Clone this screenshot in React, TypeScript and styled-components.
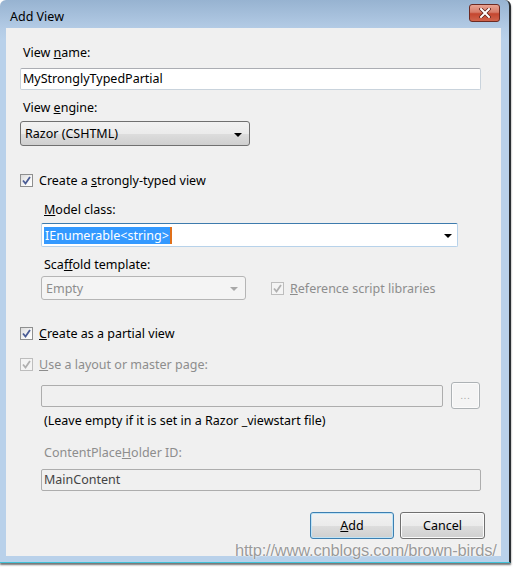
import React from "react";
import styled, { createGlobalStyle } from "styled-components";

const Global = createGlobalStyle`
  html, body { margin: 0; padding: 0; background: #ffffff; }
  body { font-family: "Noto Sans", "Open Sans", sans-serif; }
  #root { width: 513px; height: 567px; position: relative; overflow: hidden; }
`;

const Window = styled.div`
  position: relative;
  width: 509px;
  height: 562px;
  border-radius: 6px 6px 0 0;
  background: linear-gradient(180deg, #97b3d1 0px, #b3cbe5 28px, #b9d1ea 40px, #b9d1ea 100%);
  border-right: 2px solid #2b2f33;
  border-bottom: 1px solid #3fc2d8;
  box-shadow: 0 2px 2px rgba(0, 0, 0, 0.55);
  display: flex;
  flex-direction: column;
`;

const TitleBar = styled.div`
  height: 28px;
  display: flex;
  align-items: center;
  justify-content: space-between;
  padding: 0 9px 0 10px;
`;

const Title = styled.div`
  font-family: "Noto Sans", sans-serif;
  font-size: 12.5px;
  color: #000;
  padding-top: 4px;
`;

const CloseBtn = styled.div`
  width: 29px;
  height: 16px;
  margin-top: -3px;
  border: 1px solid #6d2a22;
  border-radius: 3px;
  background: linear-gradient(180deg, #e8a493 0%, #d77c69 45%, #c4462f 55%, #d0644c 100%);
  display: flex;
  align-items: center;
  justify-content: center;
`;

const Client = styled.div`
  margin: 0 0 0 6px;
  width: 495px;
  height: 528px;
  background: #f0f0f0;
  box-sizing: border-box;
  padding: 17px 16px 17px 14px;
  display: flex;
  flex-direction: column;
  font-size: 12.5px;
  color: #000;
`;

const Label = styled.div<{ $mt?: number; $indent?: number; $muted?: boolean }>`
  height: 16px;
  line-height: 16px;
  margin-top: ${(p) => p.$mt ?? 0}px;
  padding-left: ${(p) => p.$indent ?? 3}px;
  color: ${(p) => (p.$muted ? "#8d8d8d" : "#000")};
  font-size: 12.5px;
  white-space: nowrap;
`;

const TextBox = styled.div<{ $mt?: number; $w: number; $disabled?: boolean; $ml?: number }>`
  box-sizing: border-box;
  width: ${(p) => p.$w}px;
  height: 22px;
  margin-top: ${(p) => p.$mt ?? 0}px;
  margin-left: ${(p) => p.$ml ?? 0}px;
  border: 1px solid ${(p) => (p.$disabled ? "#adadad" : "#c9d3dc")};
  border-top-color: ${(p) => (p.$disabled ? "#adadad" : "#abadb3")};
  border-radius: 2px;
  background: ${(p) => (p.$disabled ? "#f0f0f0" : "#ffffff")};
  padding-left: 2px;
  line-height: 20px;
  font-size: 12.5px;
  color: ${(p) => (p.$disabled ? "#444" : "#000")};
  white-space: nowrap;
  flex-shrink: 0;
`;

const Select = styled.div<{ $mt?: number; $w: number; $h: number; $disabled?: boolean }>`
  box-sizing: border-box;
  width: ${(p) => p.$w}px;
  height: ${(p) => p.$h}px;
  margin-top: ${(p) => p.$mt ?? 0}px;
  border: 1px solid ${(p) => (p.$disabled ? "#b5b5b5" : "#707070")};
  border-radius: 3px;
  background: ${(p) =>
    p.$disabled
      ? "#f4f4f4"
      : "linear-gradient(180deg, #f2f2f2 0%, #ebebeb 50%, #dddddd 51%, #cfcfcf 100%)"};
  display: flex;
  align-items: center;
  justify-content: space-between;
  padding: 0 7px 0 4px;
  font-size: 12.5px;
  color: ${(p) => (p.$disabled ? "#8d8d8d" : "#000")};
  flex-shrink: 0;
`;

const Arrow = styled.span<{ $disabled?: boolean }>`
  width: 0;
  height: 0;
  border-left: 4px solid transparent;
  border-right: 4px solid transparent;
  border-top: 4px solid ${(p) => (p.$disabled ? "#a8a8a8" : "#000")};
  margin-top: 2px;
`;

const Combo = styled.div<{ $mt?: number }>`
  box-sizing: border-box;
  width: 417px;
  height: 24px;
  margin-top: ${(p) => p.$mt ?? 0}px;
  border: 1px solid #b7d2ea;
  border-top-color: #3d7bad;
  border-radius: 2px;
  background: #fff;
  display: flex;
  align-items: center;
  justify-content: space-between;
  padding: 0 5px 0 2px;
`;

const Selected = styled.span`
  background: #3399ff;
  color: #fff;
  height: 17px;
  line-height: 17px;
  padding: 0 1px;
  font-size: 12.5px;
  border-right: 2px solid #e0701a;
`;

const CheckRow = styled.div<{ $mt?: number; $disabled?: boolean; $ml?: number }>`
  display: flex;
  align-items: center;
  height: 16px;
  margin-top: ${(p) => p.$mt ?? 0}px;
  margin-left: ${(p) => p.$ml ?? 0}px;
  gap: 6px;
  color: ${(p) => (p.$disabled ? "#8d8d8d" : "#000")};
  font-size: 12.5px;
  white-space: nowrap;
`;

const Box = styled.span<{ $disabled?: boolean }>`
  box-sizing: border-box;
  width: 13px;
  height: 13px;
  border: 1px solid ${(p) => (p.$disabled ? "#bdbdbd" : "#8e8f8f")};
  background: ${(p) =>
    p.$disabled ? "#f4f4f4" : "linear-gradient(135deg, #dcdcdc 0%, #f6f6f6 60%, #ffffff 100%)"};
  display: flex;
  align-items: center;
  justify-content: center;
  flex-shrink: 0;
`;

const Indent = styled.div`
  margin-left: 21px;
  display: flex;
  flex-direction: column;
`;

const Row = styled.div<{ $mt?: number; $gap: number }>`
  display: flex;
  align-items: center;
  margin-top: ${(p) => p.$mt ?? 0}px;
  gap: ${(p) => p.$gap}px;
`;

const Button = styled.div<{ $default?: boolean; $w: number; $disabled?: boolean; $h?: number }>`
  box-sizing: border-box;
  width: ${(p) => p.$w}px;
  height: ${(p) => p.$h ?? 27}px;
  border: 1px solid ${(p) => (p.$disabled ? "#adb2b5" : p.$default ? "#3c7fb1" : "#707070")};
  border-radius: 3px;
  background: ${(p) =>
    p.$disabled
      ? "#f4f4f4"
      : "linear-gradient(180deg, #f2f2f2 0%, #ebebeb 50%, #dddddd 51%, #cfcfcf 100%)"};
  box-shadow: ${(p) => (p.$default ? "inset 0 0 0 1px #bfe3f6" : "inset 0 0 0 1px #fbfbfb")};
  display: flex;
  align-items: center;
  justify-content: center;
  font-size: 12.5px;
  color: ${(p) => (p.$disabled ? "#a0a0a0" : "#000")};
  flex-shrink: 0;
`;

const Dots = styled.span`
  font-size: 9px;
  letter-spacing: 1px;
`;

const Buttons = styled.div`
  display: flex;
  justify-content: flex-end;
  gap: 6px;
  margin-top: 21px;
`;

const Watermark = styled.div`
  position: absolute;
  left: 235px;
  top: 541px;
  font-family: "Liberation Sans", Arial, sans-serif;
  font-size: 16.5px;
  color: #9a9a9a;
  text-shadow: 0 0 2px #ffffff, 0 0 1px #ffffff;
  letter-spacing: -0.2px;
  white-space: nowrap;
`;

const Check = ({ disabled }: { disabled?: boolean }) => (
  <svg width="9" height="9" viewBox="0 0 9 9">
    <path
      d="M1 4.5 L3.5 7.5 L8 1"
      fill="none"
      stroke={disabled ? "#b0b0b0" : "#4a5c95"}
      strokeWidth="1.8"
    />
  </svg>
);

export default function App() {
  return (
    <>
      <Global />
      <Window>
        <TitleBar>
          <Title>Add View</Title>
          <CloseBtn>
            <svg width="12" height="10" viewBox="0 0 12 10">
              <path d="M2 1 L10 9 M10 1 L2 9" stroke="#5a1a12" strokeWidth="3.4" strokeLinecap="square" />
              <path d="M2 1 L10 9 M10 1 L2 9" stroke="#ffffff" strokeWidth="2" strokeLinecap="square" />
            </svg>
          </CloseBtn>
        </TitleBar>
        <Client>
          <Label>
            View <u>n</u>ame:
          </Label>
          <TextBox $mt={7} $w={461}>MyStronglyTypedPartial</TextBox>
          <Label $mt={10}>
            View <u>e</u>ngine:
          </Label>
          <Select $mt={5} $w={230} $h={25}>
            <span>Razor (CSHTML)</span>
            <Arrow />
          </Select>
          <CheckRow $mt={26}>
            <Box>
              <Check />
            </Box>
            <span>
              Create a <u>s</u>trongly-typed view
            </span>
          </CheckRow>
          <Indent>
            <Label $mt={14}>
              <u>M</u>odel class:
            </Label>
            <Combo $mt={5}>
              <Selected>IEnumerable&lt;string&gt;</Selected>
              <Arrow />
            </Combo>
            <Label $mt={10}>
              Sca<u>f</u>fold template:
            </Label>
            <Row $mt={3} $gap={25}>
              <Select $w={205} $h={24} $disabled>
                <span>Empty</span>
                <Arrow $disabled />
              </Select>
              <CheckRow $disabled>
                <Box $disabled>
                  <Check disabled />
                </Box>
                <span>
                  <u>R</u>eference script libraries
                </span>
              </CheckRow>
            </Row>
          </Indent>
          <CheckRow $mt={25}>
            <Box>
              <Check />
            </Box>
            <span>
              <u>C</u>reate as a partial view
            </span>
          </CheckRow>
          <CheckRow $mt={15} $disabled>
            <Box $disabled>
              <Check disabled />
            </Box>
            <span>
              <u>U</u>se a layout or master page:
            </span>
          </CheckRow>
          <Indent>
            <Row $mt={10} $gap={8}>
              <TextBox $w={402} $disabled />
              <Button $w={29} $disabled>
                <Dots>...</Dots>
              </Button>
            </Row>
            <Label $mt={4}>(Leave empty if it is set in a Razor _viewstart file)</Label>
            <Label $mt={16} $muted>
              ContentPlace<u>H</u>older ID:
            </Label>
            <TextBox $mt={8} $w={440} $disabled>
              MainContent
            </TextBox>
          </Indent>
          <Buttons>
            <Button $w={84} $default>
              <span>
                <u>A</u>dd
              </span>
            </Button>
            <Button $w={85}>Cancel</Button>
          </Buttons>
        </Client>
      </Window>
      <Watermark>http://www.cnblogs.com/brown-birds/</Watermark>
    </>
  );
}
